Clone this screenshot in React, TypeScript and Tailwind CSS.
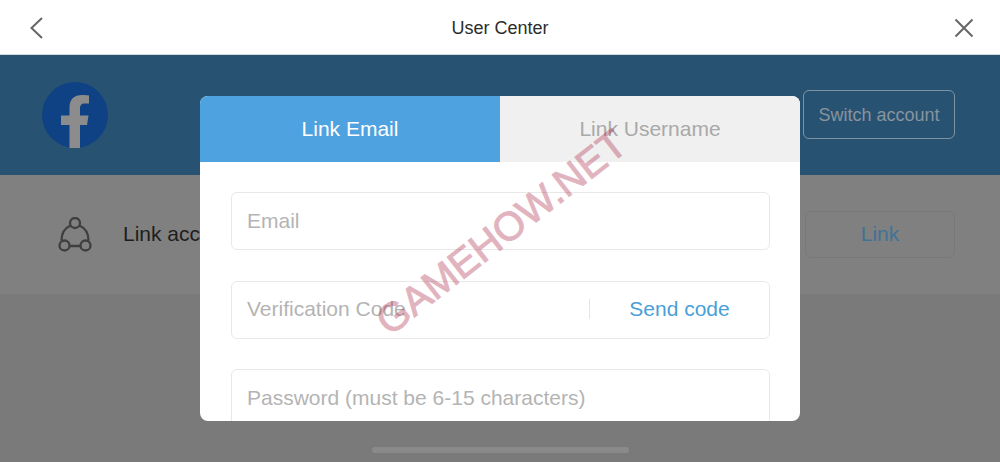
const FONT = "font-['Liberation_Sans',Arial,sans-serif]";

function Field({ placeholder, action }: { placeholder: string; action?: string }) {
  return (
    <div className="flex h-[58px] shrink-0 items-center rounded-[6px] border border-[#e8e8e8] bg-white pb-[1px] pl-[15px]">
      <span className="flex-1 text-[21px] text-[#b4b4b4]">{placeholder}</span>
      {action && (
        <span className="flex h-[20px] w-[180px] items-center justify-center border-l border-[#e4e4e4] text-[21px] text-[#4a9fd8]">
          {action}
        </span>
      )}
    </div>
  );
}

export default function App() {
  return (
    <div className={`relative flex h-[462px] w-[1000px] flex-col overflow-hidden bg-[#7a7a7a] ${FONT}`}>
      {/* Top bar */}
      <header className="flex h-[55px] shrink-0 items-center justify-between border-b border-[#cfd8de] bg-white pl-[28px] pr-[25px] pt-[2px]">
        <svg width="19" height="24" viewBox="0 0 19 24" fill="none" stroke="#666" strokeWidth="2">
          <path d="M14 2 L3.500 12 L14 22" />
        </svg>
        <span className="text-[18px] text-[#2c2c2c]">User Center</span>
        <svg width="22" height="22" viewBox="0 0 22 22" fill="none" stroke="#666" strokeWidth="2">
          <path d="M2.500 2.500 L19.500 19.500 M19.500 2.500 L2.500 19.500" />
        </svg>
      </header>

      {/* Account band */}
      <section className="flex h-[120px] shrink-0 items-center justify-between bg-[#285272] pl-[42px] pr-[45px]">
        <svg width="66" height="66" viewBox="0 0 66 66">
          <circle cx="33" cy="33" r="33" fill="#0f4284" />
          <path
            d="M27.500 66 V43 H19 V33.500 H27.500 V25.500 C27.500 17 32.500 13 40 13 C43.500 13 46 13.300 47 13.500 V21.500 H43 C39 21.500 38 23.500 38 26.500 V33.500 H46.500 L45 43 H38 V66 Z"
            fill="#8c8c8c"
          />
        </svg>
        <button className="mb-[1px] h-[49px] w-[152px] rounded-[6px] border border-[#7e93a4] pt-[2px] text-[18px] text-[#88949d]">
          Switch account
        </button>
      </section>

      {/* Link row */}
      <section className="flex h-[119px] shrink-0 items-start justify-between bg-[#808080] pl-[58px] pr-[45px] pt-[36px]">
        <div className="flex h-[46px] items-center">
          <svg className="mt-[2px]" width="34" height="36" viewBox="0 0 34 36" fill="none" stroke="#3f3f3f" strokeWidth="2.300">
            <circle cx="17" cy="6" r="5" />
            <circle cx="6.500" cy="28.500" r="5" />
            <circle cx="27.500" cy="28.500" r="5" />
            <path d="M11.500 29 H22.500 M12.500 8.500 C7 11 3.500 16 3.500 23.500 M21.500 8.500 C27 11 30.500 16 30.500 23.500" />
          </svg>
          <span className="ml-[31px] text-[21px] text-[#1e1e1e]">Link account</span>
        </div>
        <button className="h-[47px] w-[150px] rounded-[6px] border border-[#787878] pb-[2px] text-[21px] text-[#3f7396]">
          Link
        </button>
      </section>

      {/* Home indicator */}
      <div className="absolute bottom-[9px] left-[372px] h-[6px] w-[257px] rounded-full bg-[#8a8a8a]" />

      {/* Dialog */}
      <div className="absolute left-[200px] top-[96px] flex h-[325px] w-[600px] flex-col overflow-hidden rounded-[8px] bg-white">
        <div className="flex h-[66px] shrink-0 text-[21px]">
          <div className="flex w-[300px] items-center justify-center bg-[#4ea2df] text-white">Link Email</div>
          <div className="flex flex-1 items-center justify-center bg-[#f0f0f0] text-[#a9a9a9]">Link Username</div>
        </div>
        <div className="flex flex-col gap-[30.500px] pl-[31px] pr-[30px] pt-[30px]">
          <Field placeholder="Email" />
          <Field placeholder="Verification Code" action="Send code" />
          <Field placeholder="Password (must be 6-15 characters)" />
        </div>
      </div>

      {/* Watermark */}
      <span className="absolute left-[501px] top-[232px] -translate-x-1/2 -translate-y-1/2 -rotate-[38deg] whitespace-nowrap text-[40px] text-[#ac294b] opacity-35 [-webkit-text-stroke:1px_#ac294b]">
        GAMEHOW.NET
      </span>
    </div>
  );
}
